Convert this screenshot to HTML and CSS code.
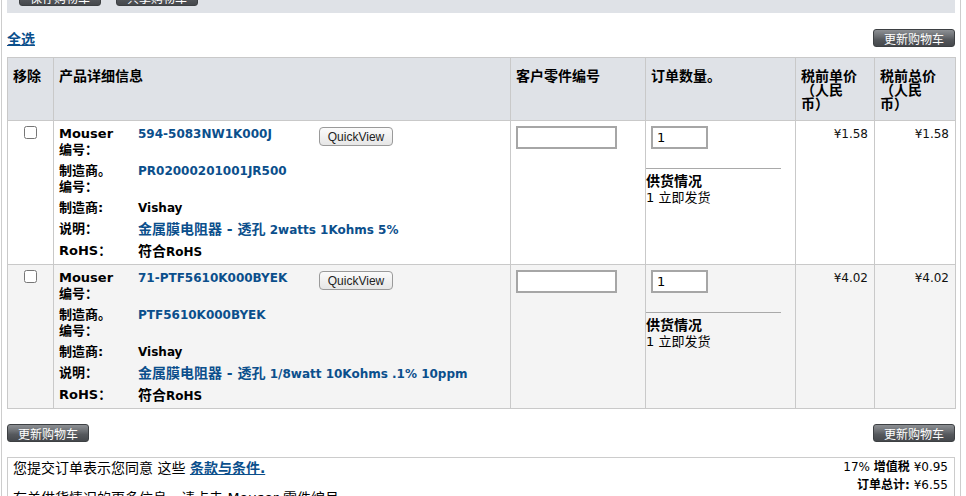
FILE: index.html
```html
<!DOCTYPE html>
<html lang="zh-CN">
<head>
<meta charset="utf-8">
<title>购物车</title>
<link rel="stylesheet" href="styles.css">
</head>
<body>
<div class="page">
  <div class="toolbar">
    <button class="btn-dark">保存购物车</button>
    <button class="btn-dark">共享购物车</button>
  </div>

  <div class="actions top-actions">
    <a href="#" class="select-all">全选</a>
    <button class="btn-dark">更新购物车</button>
  </div>

  <table class="cart">
    <colgroup>
      <col class="c-remove"><col class="c-product"><col class="c-cust"><col class="c-qty"><col class="c-unit"><col class="c-total">
    </colgroup>
    <thead>
      <tr>
        <th>移除</th>
        <th>产品详细信息</th>
        <th>客户零件编号</th>
        <th>订单数量。</th>
        <th>税前单价（人民币）</th>
        <th>税前总价（人民币）</th>
      </tr>
    </thead>
    <tbody>
      <tr>
        <td class="remove"><input type="checkbox" class="check"></td>
        <td class="product">
          <div class="details">
            <span class="label">Mouser 编号：</span>
            <a class="value link" href="#">594-5083NW1K000J</a>
            <button class="quickview">QuickView</button>
            <span class="label">制造商。 编号：</span>
            <a class="value link wide" href="#">PR02000201001JR500</a>
            <span class="label">制造商:</span>
            <span class="value wide">Vishay</span>
            <span class="label">说明：</span>
            <a class="value link wide" href="#"><span class="zh">金属膜电阻器 - 透孔</span> 2watts 1Kohms 5%</a>
            <span class="label">RoHS：</span>
            <span class="value wide"><span class="zh">符合</span>RoHS</span>
          </div>
        </td>
        <td class="cust"><input type="text" class="text-in cust-in"></td>
        <td class="qty">
          <div class="qty-box"><input type="text" class="text-in qty-in" value="1"></div>
          <div class="stock-rule"></div>
          <div class="stock">
            <div class="stock-title">供货情况</div>
            <div class="stock-line">1 立即发货</div>
          </div>
        </td>
        <td class="price">¥1.58</td>
        <td class="price">¥1.58</td>
      </tr>
      <tr class="alt">
        <td class="remove"><input type="checkbox" class="check"></td>
        <td class="product">
          <div class="details">
            <span class="label">Mouser 编号：</span>
            <a class="value link" href="#">71-PTF5610K000BYEK</a>
            <button class="quickview">QuickView</button>
            <span class="label">制造商。 编号：</span>
            <a class="value link wide" href="#">PTF5610K000BYEK</a>
            <span class="label">制造商:</span>
            <span class="value wide">Vishay</span>
            <span class="label">说明：</span>
            <a class="value link wide" href="#"><span class="zh">金属膜电阻器 - 透孔</span> 1/8watt 10Kohms .1% 10ppm</a>
            <span class="label">RoHS：</span>
            <span class="value wide"><span class="zh">符合</span>RoHS</span>
          </div>
        </td>
        <td class="cust"><input type="text" class="text-in cust-in"></td>
        <td class="qty">
          <div class="qty-box"><input type="text" class="text-in qty-in" value="1"></div>
          <div class="stock-rule"></div>
          <div class="stock">
            <div class="stock-title">供货情况</div>
            <div class="stock-line">1 立即发货</div>
          </div>
        </td>
        <td class="price">¥4.02</td>
        <td class="price">¥4.02</td>
      </tr>
    </tbody>
  </table>

  <div class="actions bottom-actions">
    <button class="btn-dark">更新购物车</button>
    <button class="btn-dark">更新购物车</button>
  </div>

  <div class="summary">
    <div class="terms">
      <p>您提交订单表示您同意 这些 <a href="#" class="terms-link">条款与条件.</a></p>
      <p>有关供货情况的更多信息，请点击 Mouser 零件编号。</p>
    </div>
    <div class="totals">
      <div>17% <b class="zh-s">增值税</b> ¥0.95</div>
      <div><b class="zh-s">订单总计:</b> ¥6.55</div>
    </div>
  </div>
</div>
</body>
</html>
```

FILE: styles.css
```css
* { box-sizing: border-box; }

html, body {
  margin: 0;
  padding: 0;
  background: #ffffff;
}

body {
  font-family: "DejaVu Sans", "Noto Sans CJK SC", sans-serif;
  font-size: 12px;
  color: #000;
}

.page {
  margin-left: 1px;
  width: 960px;
  min-height: 496px;
  border-left: 1px solid #cdcdcd;
  border-right: 1px solid #cdcdcd;
  padding: 0 5px;
}

/* dark action buttons */
.btn-dark {
  display: block;
  width: 82px;
  height: 18px;
  padding: 0;
  border: 1px solid #3d4043;
  border-radius: 3px;
  background: linear-gradient(#8d9094 0%, #6a6d71 40%, #55585c 60%, #45484c 100%);
  color: #fff;
  font-family: "Noto Sans CJK SC", sans-serif;
  font-size: 12px;
  line-height: 15px;
  cursor: pointer;
}

.toolbar {
  height: 13px;
  background: #dfe2e7;
  display: flex;
  gap: 15px;
  padding-left: 12px;
  align-items: flex-start;
}

.toolbar .btn-dark {
  margin-top: -12px;
}

.actions {
  display: flex;
  justify-content: space-between;
  align-items: center;
  height: 18px;
}

.top-actions { margin-top: 16px; }

.select-all {
  font-family: "Noto Sans CJK SC", sans-serif;
  font-size: 14px;
  font-weight: bold;
  color: #0b4f8c;
  text-decoration: underline;
  line-height: 18px;
}

/* cart table */
.cart {
  margin-top: 10px;
  width: 948px;
  border-collapse: collapse;
  table-layout: fixed;
  border: 1px solid #c9c9c9;
}

.c-remove { width: 46px; }
.c-product { width: 457px; }
.c-cust { width: 135px; }
.c-qty { width: 150px; }
.c-unit { width: 79px; }
.c-total { width: 81px; }

.cart th,
.cart td {
  border: 1px solid #c9c9c9;
  vertical-align: top;
  text-align: left;
}

.cart th {
  height: 63px;
  background: #dfe2e7;
  font-family: "Noto Sans CJK SC", sans-serif;
  font-size: 14px;
  font-weight: bold;
  line-height: 14px;
  padding: 10px 9px 9px 5px;
  text-spacing-trim: space-all;
}

.cart td {
  padding: 5px 5px;
  background: #ffffff;
}

.cart td.product { padding-bottom: 4px; }

.cart tr.alt td { background: #f4f4f4; }

.cart td.remove { text-align: center; }

.check {
  width: 13px;
  height: 13px;
  margin: 0;
}

.details {
  display: grid;
  grid-template-columns: 79px 181px auto;
  row-gap: 5px;
  line-height: 16px;
}

.label {
  font-size: 13px;
  font-weight: bold;
  word-break: keep-all;
}

.value {
  font-size: 12px;
  font-weight: bold;
  color: #000;
}

.value.wide { grid-column: 2 / 4; }

.link {
  color: #0b4f8c;
  text-decoration: none;
}

.zh {
  font-size: 14px;
}

.quickview {
  justify-self: start;
  align-self: start;
  margin-top: 1px;
  width: 74px;
  height: 19px;
  padding: 0;
  border: 1px solid #9a9a9a;
  border-radius: 4px;
  background: linear-gradient(#fbfbfb, #e6e6e6);
  color: #222;
  font-family: "Liberation Sans", sans-serif;
  font-size: 12px;
  line-height: 16px;
}

.text-in {
  display: block;
  height: 23px;
  margin: 0;
  padding: 0 4px;
  border: 2px solid #a6a6a6;
  background: #fff;
  font-family: "DejaVu Sans", sans-serif;
  font-size: 13px;
  color: #000;
}

.cust-in { width: 101px; }
.qty-in { width: 57px; }

.cart td.qty { padding: 0; }

.qty-box { padding: 5px 0 0 5px; }

.stock-rule {
  margin-top: 19px;
  width: 135px;
  border-top: 1px solid #a9a9a9;
}

.stock {
  margin-top: 3px;
  font-size: 14px;
  line-height: 17px;
}

.stock-title {
  font-family: "Noto Sans CJK SC", sans-serif;
  font-weight: bold;
}

.stock-line { font-size: 13px; }

.cart td.price {
  text-align: right;
  padding: 6px 6px;
  line-height: 15px;
  color: #111;
}

.bottom-actions { margin-top: 15px; }

/* summary */
.summary {
  margin-top: 15px;
  border: 1px solid #cccccc;
  display: flex;
  justify-content: space-between;
  padding: 0 6px 0 5px;
  min-height: 40px;
}

.terms p {
  margin: 1px 0 12px;
  font-size: 14px;
  line-height: 18px;
}

.terms-link {
  color: #0b4f8c;
  font-weight: bold;
  text-decoration: underline;
}

.totals {
  text-align: right;
  font-size: 12px;
  line-height: 18px;
}

.zh-s {
  font-size: 12px;
  font-weight: bold;
}
```
